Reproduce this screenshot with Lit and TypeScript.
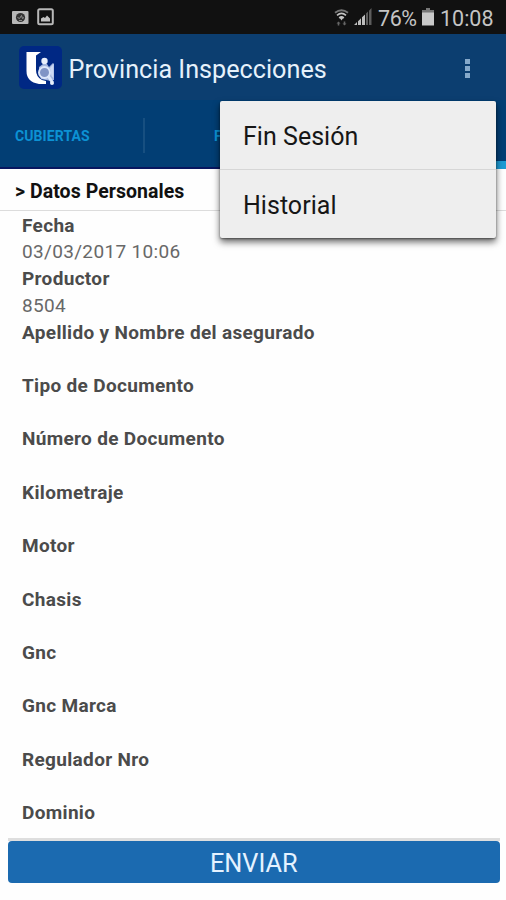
import { LitElement, html, css, svg } from "lit";
import { customElement, property } from "lit/decorators.js";

interface Field {
  label: string;
  value: string;
}

const FIELDS: Field[] = [
  { label: "Fecha", value: "03/03/2017 10:06" },
  { label: "Productor", value: "8504" },
  { label: "Apellido y Nombre del asegurado", value: "" },
  { label: "Tipo de Documento", value: "" },
  { label: "Número de Documento", value: "" },
  { label: "Kilometraje", value: "" },
  { label: "Motor", value: "" },
  { label: "Chasis", value: "" },
  { label: "Gnc", value: "" },
  { label: "Gnc Marca", value: "" },
  { label: "Regulador Nro", value: "" },
  { label: "Dominio", value: "" },
];

@customElement("status-bar")
class StatusBar extends LitElement {
  static styles = css`
    :host {
      display: flex;
      align-items: center;
      height: 34px;
      padding: 0 12px 0 11px;
      box-sizing: border-box;
      background: #111111;
      color: #c4c4c4;
      font-size: 21.5px;
    }
    svg { display: block; flex: none; }
    .camera { margin-right: 7px; }
    .spacer { flex: 1; }
    .wifi { margin-right: 5px; }
    .signal { margin-right: 6px; }
    .battery { margin: 0 6px 0 3px; }
    .text { line-height: 34px; padding-top: 3px; white-space: nowrap; }
    .percent { width: 41px; letter-spacing: -0.4px; }
    .clock { width: 54px; letter-spacing: 0; }
  `;
  render() {
    return html`
      <svg class="camera" width="19" height="16" viewBox="0 0 19 16">
        <rect x="1" y="2" width="16.5" height="13" rx="1" fill="#b8b8b8" />
        <circle cx="9.5" cy="8.5" r="4.6" fill="#333" />
        <path d="M6.5 8.5l2 1 2-3 1 3 1.5-1M8 11.5h3" stroke="#999" fill="none" stroke-width=".9" />
      </svg>
      <svg width="18" height="18" viewBox="0 0 18 18">
        <rect x="1.2" y="1.2" width="14.6" height="15" rx="1.5" fill="none" stroke="#b8b8b8" stroke-width="2" />
        <path d="M4 13.5v-3l2.5-1.5 1.5 1 2-2.5 3 3v3z" fill="#c2c2c2" />
      </svg>
      <span class="spacer"></span>
      <svg class="wifi" width="15" height="17" viewBox="0 0 15 17">
        <path d="M1 3.7Q7.5-1 14 3.7" fill="none" stroke="#777" stroke-width="2" />
        <path d="M3 6.3Q7.5 2.6 12 6.3M5.2 9Q7.5 7 9.8 9" fill="none" stroke="#c4c4c4" stroke-width="1.7" />
        <path d="M7.5 11.5L5.8 9h3.4z" fill="#c4c4c4" />
        <path d="M4.5 12.5l2 2h-1.2v2h-1.6v-2H2.5zM10.5 16.5l-2-2h1.2v-2h1.6v2h1.2z" fill="#666" />
      </svg>
      <svg class="signal" width="18" height="18" viewBox="0 0 18 18">
        <path d="M0 17L3 14v3zM4 13.2L7 10.3V17H4zM8 9.3L11 6.4V17H8z" fill="#bdbdbd" />
        <path d="M12 5.5L14 3.5V17h-2zM15 2.7L17.5 0V17H15z" fill="#5d5d5d" />
      </svg>
      <span class="text percent">76%</span>
      <svg class="battery" width="12" height="18" viewBox="0 0 12 18">
        <path d="M4 0h4v2h4v3H0V2h4z" fill="#777" />
        <path d="M0 4.5h12V17.5H0z" fill="#c9c9c9" />
      </svg>
      <span class="text clock">10:08</span>
    `;
  }
}

@customElement("app-header")
class AppHeader extends LitElement {
  static styles = css`
    :host {
      display: flex;
      align-items: center;
      height: 66px;
      padding: 0 34px 0 18px;
      box-sizing: border-box;
      background: #0c3e70;
      color: #e6f1fb;
    }
    .logo { display: block; flex: none; margin-right: 5.5px; }
    .title {
      flex: 1;
      padding-top: 5px;
      font-size: 25.2px;
      line-height: 32px;
      white-space: nowrap;
    }
    .more { display: block; margin-top: 3px; }
  `;
  render() {
    return html`
      <svg class="logo" width="45" height="45" viewBox="0 0 45 45">
        <rect x="1" y="1" width="43" height="43" rx="5" fill="#002884" />
        <path d="M8 7H23L18 10.5V25Q18 32 24 35L28 36V39H21Q8.500 37 8.500 26V7z" fill="#fff" />
        <circle cx="26.5" cy="16" r="3.2" fill="#e8effc" />
        <path d="M21 22l4-3h4l2 3 4-4 1 1v16l-3 1-5-1-5-1-2-6z" fill="#a5b7df" />
        <circle cx="26.500" cy="27.500" r="5.500" fill="#8094c6" stroke="#dce6fa" stroke-width="2" />
        <path d="M30.500 31.500l4 6" fill="none" stroke="#dce6fa" stroke-width="3" />
        <path d="M32 23l3.500-4v14l-2-2z" fill="#cedaf4" />
        <circle cx="34" cy="38" r="2" fill="#e8effc" />
      </svg>
      <span class="title">Provincia Inspecciones</span>
      <svg class="more" width="10" height="20" viewBox="0 0 10 20">
        ${[0, 7, 14].map((y) => svg`<rect x="3" y=${y} width="5" height="5" fill="#86a9ca" />`)}
      </svg>
    `;
  }
}

@customElement("tab-strip")
class TabStrip extends LitElement {
  static styles = css`
    :host {
      display: flex;
      align-items: center;
      position: relative;
      height: 69px;
      box-sizing: border-box;
      padding: 0 0 0 15px;
      background: #023e74;
      border-bottom: 2px solid #08165f;
      color: #0c92d4;
      font-size: 14px;
      font-weight: 700;
    }
    .first { width: 128px; letter-spacing: 0.1px; padding-top: 4px; }
    .divider { width: 2px; height: 35px; background: #174f80; margin-top: 3px; }
    .second { padding: 4px 0 0 69px; }
    .indicator {
      position: absolute;
      left: 224px;
      right: 0;
      bottom: -2px;
      height: 8px;
      background: #1d9bd4;
    }
  `;
  render() {
    return html`
      <span class="first">CUBIERTAS</span>
      <span class="divider"></span>
      <span class="second">F</span>
      <span class="indicator"></span>
    `;
  }
}

@customElement("overflow-menu")
class OverflowMenu extends LitElement {
  static styles = css`
    :host {
      display: block;
      background: #eeeeee;
      border-radius: 2px;
      box-shadow: 0 4px 7px rgba(0, 0, 0, 0.6), 0 1px 2px rgba(0, 0, 0, 0.4);
      color: #161616;
      font-size: 25px;
    }
    .item {
      height: 68px;
      box-sizing: border-box;
      padding: 2px 0 0 23px;
      line-height: 67px;
      letter-spacing: 0.03px;
    }
    .item + .item { border-top: 1px solid #d6d6d6; }
  `;
  render() {
    return html`${["Fin Sesión", "Historial"].map((t) => html`<div class="item">${t}</div>`)}`;
  }
}

@customElement("field-list")
class FieldList extends LitElement {
  @property({ attribute: false }) fields: Field[] = [];
  static styles = css`
    :host {
      display: block;
      padding: 1.8px 22px 0;
      color: #4b4b4b;
      font-size: 19px;
    }
    .field { height: 53.42px; line-height: 26.7px; }
    .label { height: 26.7px; font-weight: 700; letter-spacing: 0.33px; white-space: nowrap; }
    .value { height: 26.7px; color: #686868; letter-spacing: 0.33px; }
  `;
  render() {
    return html`${this.fields.map(
      (f) => html`<div class="field">
        <div class="label">${f.label}</div>
        <div class="value">${f.value}</div>
      </div>`
    )}`;
  }
}

@customElement("app-root")
class AppRoot extends LitElement {
  static styles = css`
    :host {
      display: flex;
      flex-direction: column;
      position: relative;
      width: 506px;
      height: 900px;
      overflow: hidden;
      background: #fefefe;
      font-family: Roboto, "Liberation Sans", sans-serif;
    }
    .section {
      height: 42px;
      box-sizing: border-box;
      padding: 2px 0 0 15px;
      border-bottom: 1px solid #dcdcdc;
      color: #111;
      font-size: 19.5px;
      font-weight: 700;
      letter-spacing: 0.05px;
      line-height: 41px;
    }
    .fields { flex: 1; min-height: 0; overflow: hidden; }
    .footer { padding: 0 6px 17px 7.5px; }
    .rule { height: 3px; background: #dedede; }
    .send {
      display: block;
      width: 100%;
      height: 42px;
      border: 0;
      border-radius: 4px;
      padding: 3px 0 0;
      background: #1b6ab0;
      color: #e5f2ff;
      font: 400 25.3px/39px Roboto, "Liberation Sans", sans-serif;
    }
    .menu { position: absolute; left: 220px; top: 101px; width: 276px; height: 137px; }
  `;
  render() {
    return html`
      <status-bar></status-bar>
      <app-header></app-header>
      <tab-strip></tab-strip>
      <div class="section">&gt; Datos Personales</div>
      <field-list class="fields" .fields=${FIELDS}></field-list>
      <div class="footer">
        <div class="rule"></div>
        <button class="send">ENVIAR</button>
      </div>
      <overflow-menu class="menu"></overflow-menu>
    `;
  }
}
